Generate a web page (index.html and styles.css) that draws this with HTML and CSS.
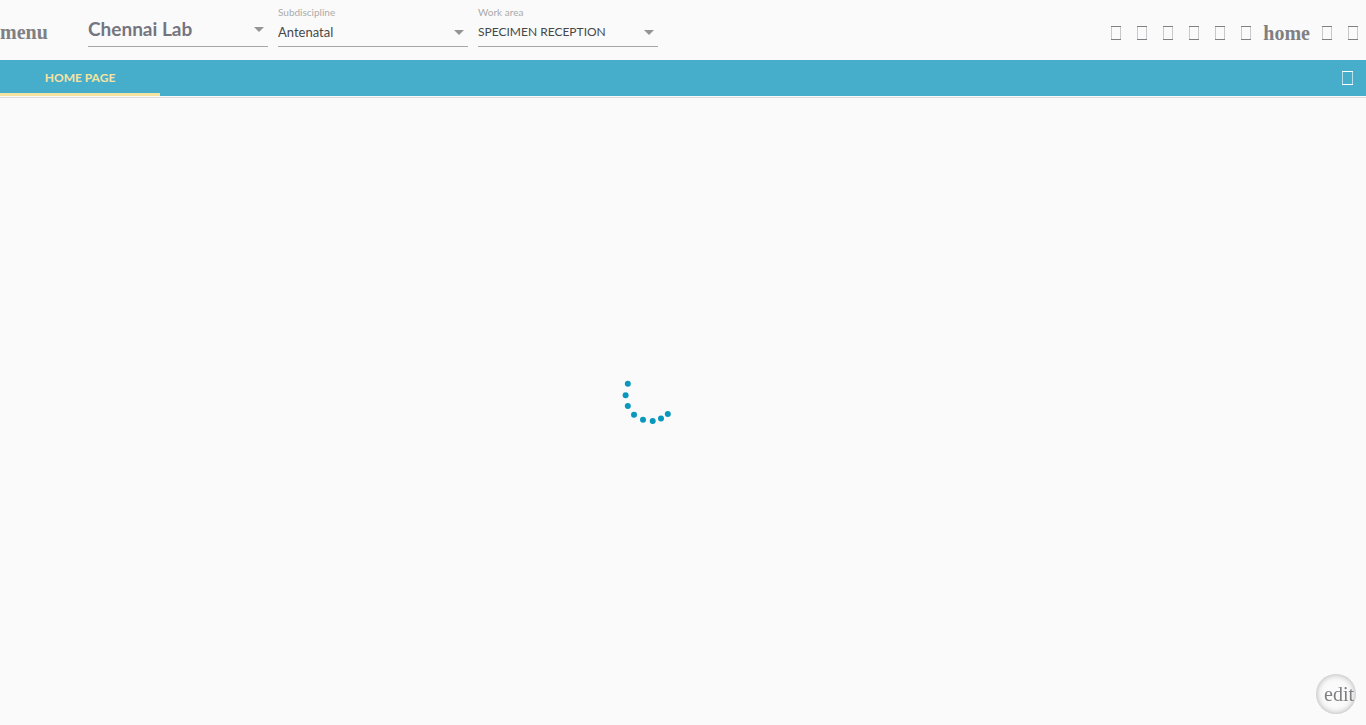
FILE: index.html
```html
<!DOCTYPE html>
<html lang="en">
<head>
<meta charset="utf-8">
<title>Chennai Lab</title>
<link rel="stylesheet" href="styles.css">
</head>
<body>
<svg width="0" height="0" hidden>
  <symbol id="box" viewBox="0 0 12 14"><path d="M1.5 0V14M10.5 0V14" stroke="currentColor" stroke-opacity=".4" fill="none"/><path d="M1 .5H11M1 13.5H11" stroke="currentColor" fill="none"/></symbol>
  <symbol id="arrow" viewBox="0 0 10 5"><path d="M0 0H10L5 5Z" fill="#949494"/></symbol>
</svg>
<header class="topbar">
  <button class="word menu" type="button">menu</button>
  <div class="field lab">
    <select class="select" aria-label="Lab"><option>Chennai Lab</option></select>
    <svg class="arrow"><use href="#arrow"/></svg>
  </div>
  <div class="field subdiscipline">
    <label class="label" for="sub">Subdiscipline</label>
    <select class="select" id="sub"><option>Antenatal</option></select>
    <svg class="arrow"><use href="#arrow"/></svg>
  </div>
  <div class="field area">
    <label class="label" for="area">Work area</label>
    <select class="select" id="area"><option>SPECIMEN RECEPTION</option></select>
    <svg class="arrow"><use href="#arrow"/></svg>
  </div>
  <nav class="actions">
    <button class="icon" type="button"><svg><use href="#box"/></svg></button>
    <button class="icon" type="button"><svg><use href="#box"/></svg></button>
    <button class="icon" type="button"><svg><use href="#box"/></svg></button>
    <button class="icon" type="button"><svg><use href="#box"/></svg></button>
    <button class="icon" type="button"><svg><use href="#box"/></svg></button>
    <button class="icon" type="button"><svg><use href="#box"/></svg></button>
    <button class="word" type="button">home</button>
    <button class="icon" type="button"><svg><use href="#box"/></svg></button>
    <button class="icon" type="button"><svg><use href="#box"/></svg></button>
  </nav>
</header>
<div class="tabs">
  <button class="tab" type="button">HOME PAGE</button>
  <button class="icon tab-action" type="button"><svg viewBox="0 0 13 14"><path d="M1.5 0V14M11.5 0V14" stroke="currentColor" stroke-opacity=".6"/><path d="M1 .5H12M1 13.5H12" stroke="currentColor"/></svg></button>
</div>
<main class="content">
  <svg class="spinner" viewBox="0 0 50 46" role="img" aria-label="Loading">
    <circle cx="5.8" cy="5.8" r="3"/><circle cx="3.6" cy="17.2" r="3"/><circle cx="5.8" cy="28" r="3"/><circle cx="12" cy="36.7" r="3"/><circle cx="21" cy="41.8" r="3"/><circle cx="30.7" cy="43" r="3"/><circle cx="39" cy="40.5" r="3"/><circle cx="45.8" cy="36" r="3"/>
  </svg>
</main>
<button class="edit" type="button">edit</button>
</body>
</html>
```
FILE: styles.css
```css
* { box-sizing: border-box; }
body {
  margin: 0;
  min-height: 100vh;
  display: flex;
  flex-direction: column;
  background: #fafafa;
  font-family: "Lato", sans-serif;
}
button {
  border: 0;
  padding: 0;
  background: none;
  color: #808084;
}
svg { display: block; }
.topbar {
  display: flex;
  height: 60px;
  align-items: flex-start;
  gap: 10px;
}
.word {
  font: bold 20px/24px "Liberation Serif", serif;
}
.menu {
  width: 78px;
  padding-top: 20px;
  text-align: left;
}
.field {
  display: grid;
  grid-template-rows: 20px 25px;
  width: 180px;
  padding-top: 1px;
  border-bottom: 1px solid #a6a6a6;
}
.subdiscipline { width: 190px; }
.label {
  grid-area: 1 / 1;
  color: #aaa;
  font: 10px/22px "Lato", sans-serif;
}
.select {
  grid-area: 2 / 1;
  width: 100%;
  height: 22px;
  padding: 0;
  border: 0;
  appearance: none;
  background: none;
  color: #484848;
  font: 13px/22px "Lato", sans-serif;
}
.area .select { font-size: 12px; }
.arrow {
  grid-area: 2 / 1;
  justify-self: end;
  width: 10px;
  height: 5px;
  margin: 9px 4px 0 0;
  pointer-events: none;
}
.lab { grid-template-rows: 17px 28px; }
.lab .select {
  height: 22px;
  color: #757580;
  font: bold 19px/22px "Lato", sans-serif;
}
.actions {
  display: flex;
  align-items: center;
  gap: 14px;
  margin-left: auto;
  padding: 21px 7px 0 0;
}
.actions .word { margin: 0 -3px; }
.icon svg {
  width: 12px;
  height: 14px;
}
.tabs {
  display: flex;
  justify-content: space-between;
  height: 36px;
  background: #46aecb;
  box-shadow: 0 1px #fafafa, 0 2px #dcdcdc;
}
.tab {
  width: 160px;
  padding-top: 2px;
  border-bottom: 3px solid #f7e3a1;
  color: #f7e3a1;
  font: bold 12px/30px "Lato", sans-serif;
}
.tab-action {
  margin-right: 12px;
  color: #fff;
}
.tab-action svg { width: 13px; }
.content {
  flex: 1;
  display: grid;
  place-content: center;
  padding: 0 72px 20px 0;
}
.spinner {
  width: 50px;
  height: 46px;
  fill: #0898bd;
}
.edit {
  position: fixed;
  right: 10px;
  bottom: 11px;
  width: 40px;
  height: 40px;
  padding-left: 8px;
  border-radius: 50%;
  box-shadow: inset 0 0 6px #aaa;
  font: 20px/40px "Liberation Serif", serif;
  text-align: left;
}
```
